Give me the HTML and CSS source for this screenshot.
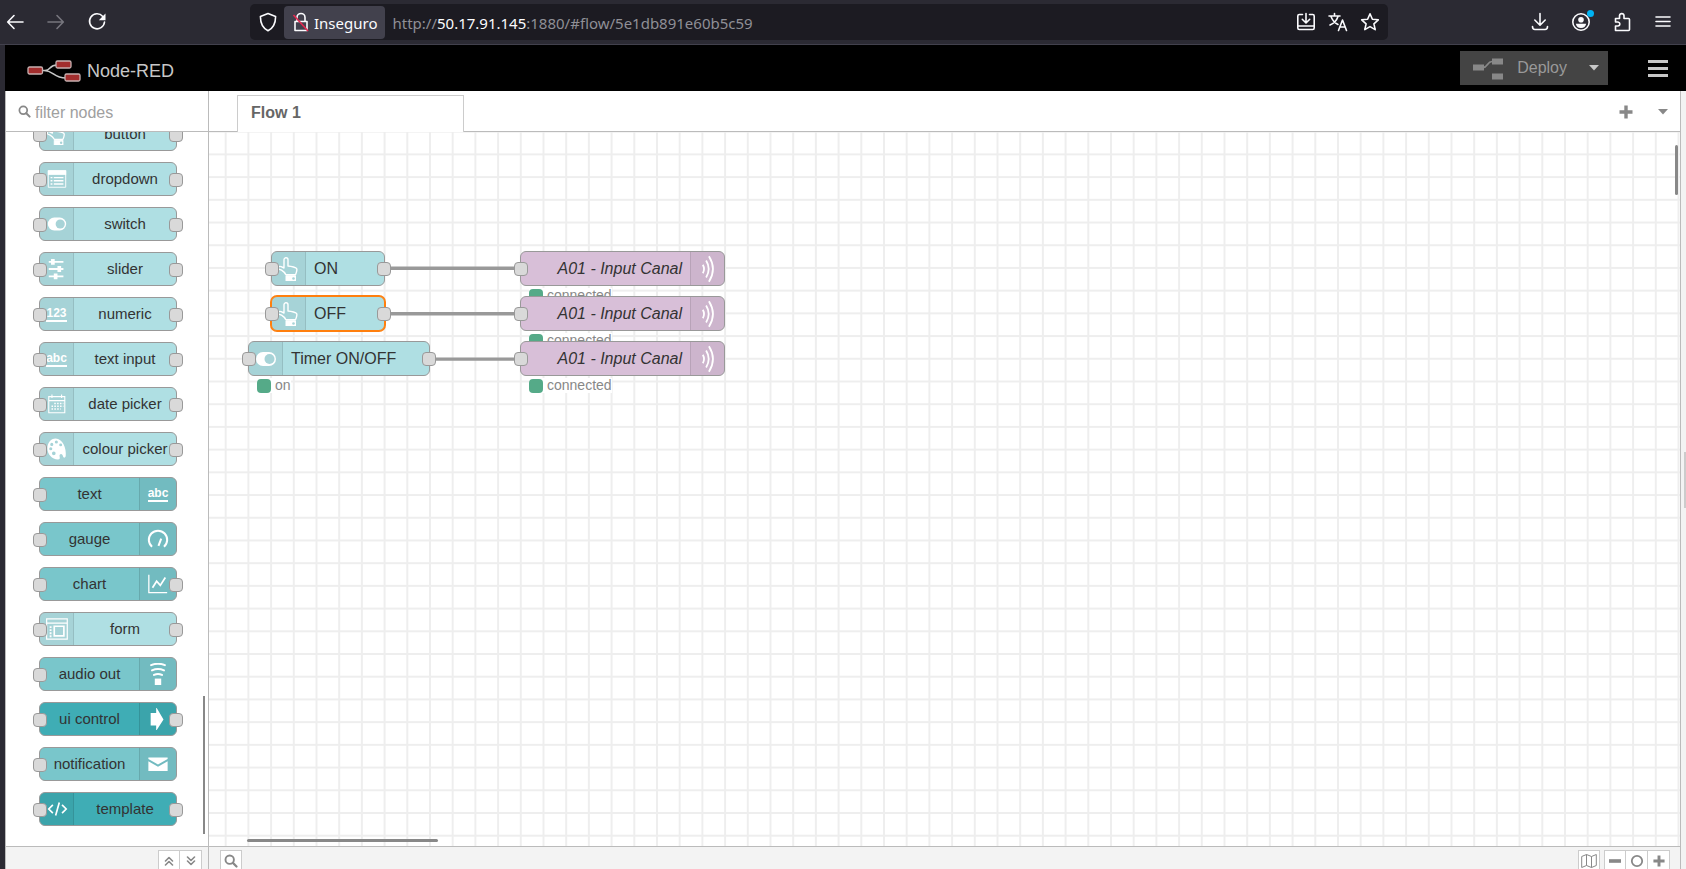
FILE: index.html
```html
<!DOCTYPE html>
<html lang="en">
<head>
<meta charset="utf-8">
<title>Node-RED : 50.17.91.145</title>
<link rel="stylesheet" href="styles.css">
</head>
<body>
<svg class="symbols" aria-hidden="true">
  <symbol id="i-hand" viewBox="0 0 24 24"><path d="M7 11V2.800a2 2 0 0 1 4 0V9l2.800.4 2.700.6 2.300.8q1.200.5 1.100 2-.2 2.500-1.400 5H9Q7.500 15 4.500 13.200L2.300 12.300Q.6 11.300 1.500 10q.9-1 2.700-.3z" fill="none" stroke="#fff" stroke-width="1.400" stroke-linejoin="round"/><path d="M9 18.800h9.500V24H9z" fill="#fff" stroke="#fff"/><circle cx="16.500" cy="21.500" r="1.300" fill="#a7d3d7"/></symbol>
  <symbol id="i-list" viewBox="0 0 24 24"><path d="M2.500 3h19v18h-19z" fill="none" stroke="#fff"/><path d="M2 2.500h20v5H2z" fill="#fff"/><path d="M5 10.500h2m1.500 0H19M5 14h2m1.500 0H19M5 17.500h2m1.500 0H19" stroke="#fff" stroke-width="1.600"/></symbol>
  <symbol id="i-switch" viewBox="0 0 24 24"><rect x="2" y="5" width="20" height="14" rx="7" fill="#fff"/><circle cx="15.500" cy="12" r="5" fill="#a7d3d7"/></symbol>
  <symbol id="i-slider" viewBox="0 0 24 24"><path d="M3 4.200h16M3 12h16M3 20h16" stroke="#fff" stroke-width="2"/><path d="M5.500 1h4v6.400h-4zM12.500 8.800h4v6.400h-4zM8.500 16.800h4v6.400h-4z" fill="#fff"/></symbol>
  <symbol id="i-date" viewBox="0 0 24 24"><path d="M3 4h17.500v17.500H3zM3 8.300h17.500M6.500 1.500v4M17 1.500v4" fill="none" stroke="#fff" stroke-width="1.200"/><path d="M9 11.500h10M6 14.500h13M6 17.500h10" stroke="#fff" stroke-width="1.500" stroke-dasharray="1.700 1.400"/></symbol>
  <symbol id="i-palette" viewBox="0 0 24 24"><path fill="#fff" fill-rule="evenodd" d="M10.500.5C5 .5 1.500 5.500 1.500 11.500S6.500 23.500 13 23.500c2.200 0 2.300-1.500 1.900-3-.5-2 .4-3 1.500-3s1.900 1.200 2.200 2.800c.4 1.600 2.200 1.700 2.900-.3C22.500 11 18 .5 10.500.5zM4.600 7a1.700 1.700 0 1 0 3.400 0 1.700 1.700 0 1 0-3.400 0zm5-2.700a1.700 1.700 0 1 0 3.400 0 1.700 1.700 0 1 0-3.400 0zM3.500 11.700a1.700 1.700 0 1 0 3.400 0 1.700 1.700 0 1 0-3.400 0zm3 5a2 2 0 1 0 4 0 2 2 0 1 0-4 0zm7.900-9.200a1.600 1.600 0 1 0 3.200 0 1.600 1.600 0 1 0-3.200 0z"/></symbol>
  <symbol id="i-gauge" viewBox="0 0 24 24"><path d="M5.500 20.500A10 10 0 1 1 18.500 20.500M12.500 19.500l3-8" fill="none" stroke="#fff" stroke-width="2.200"/></symbol>
  <symbol id="i-chart" viewBox="0 0 24 24"><path d="M2 2v19.500H22" fill="none" stroke="#fff" stroke-width="1.400"/><path d="M6 16l4.500-7 4 4.500L20 5" fill="none" stroke="#fff" stroke-width="1.900"/></symbol>
  <symbol id="i-form" viewBox="0 0 24 24"><path d="M.7 1h22.500v22H.7zM.7 5.500h22.500" fill="none" stroke="#fff" stroke-width="1.300"/><path d="M9 9h10.500v10.500H9z" fill="none" stroke="#fff" stroke-width="1.800"/><path d="M5 9v12" stroke="#fff" stroke-width="2" stroke-dasharray="2 1.300"/></symbol>
  <symbol id="i-audio" viewBox="0 0 24 24"><path d="M8.500 17h7v7h-7z" fill="#fff"/><path d="M4.500 2.300q7.500-3 15 0M5.500 8q6.500-3 13 0M7.700 13q4.300-2.200 8.600 0" fill="none" stroke="#fff" stroke-width="2.200" stroke-linecap="round"/></symbol>
  <symbol id="i-arrow" viewBox="0 0 24 24"><path d="M4 5.500h6V-1l8 13.500L10 25V19H4z" fill="#fff"/></symbol>
  <symbol id="i-mail" viewBox="0 0 24 24"><path d="M1.500 6v.5l10.500 6 10.500-6V5h-21zM1.500 9v10.500h21V9L12 15z" fill="#fff"/></symbol>
  <symbol id="i-code" viewBox="0 0 24 24"><path d="M7.500 7.500L3 12l4.500 4.500M17.500 7.500L22 12l-4.500 4.500M14.500 5l-4 14" fill="none" stroke="#fff" stroke-width="1.800"/></symbol>
  <symbol id="i-waves" viewBox="0 0 24 34"><path d="M6.500 12.500q2.600 4.500 0 9M10 8q5.500 9 0 18M13 3.500q8.500 13.500 0 27" fill="none" stroke="#fff" stroke-width="1.900"/></symbol>
  <symbol id="i-search" viewBox="0 0 14 14"><circle cx="5.700" cy="5.700" r="4.200" fill="none" stroke="currentColor" stroke-width="1.900"/><path d="M8.900 8.900l3.600 3.600" stroke="currentColor" stroke-width="2.200" stroke-linecap="round"/></symbol>
  <symbol id="i-caret" viewBox="0 0 10 6"><path d="M0 0h10L5 5.500z" fill="currentColor"/></symbol>
  <symbol id="i-plus" viewBox="0 0 14 14"><path d="M7 .5v13M.5 7h13" stroke="currentColor" stroke-width="3.400"/></symbol>
</svg>

<header class="browser">
  <nav class="nav-buttons" aria-label="Navigation">
    <button aria-label="Back"><svg width="20" height="20" viewBox="0 0 20 20"><path d="M18 10H3M9 3.500L2.700 10 9 16.500" class="line"/></svg></button>
    <button aria-label="Forward" class="dim"><svg width="20" height="20" viewBox="0 0 20 20"><path d="M2 10h15M11 3.500l6.300 6.500L11 16.500" class="line"/></svg></button>
    <button aria-label="Reload"><svg width="20" height="20" viewBox="0 0 20 20"><path d="M15.800 4.500A7.500 7.500 0 1 0 17.500 10" class="line"/><path d="M18.500 1.500v6.700h-6.700z" fill="currentColor"/></svg></button>
  </nav>
  <div class="address">
    <button class="shield" aria-label="Tracking protection"><svg width="20" height="20" viewBox="0 0 20 20"><path d="M10 1.500l7.600 3C17.600 11 15.500 16 10 18.800 4.500 16 2.400 11 2.400 4.500z" class="line"/></svg></button>
    <button class="identity"><svg width="18" height="20" viewBox="0 0 18 20"><path d="M5 9V5.500a4 4 0 0 1 8 0V9M3 9.500h12v9H3z" class="line"/><path d="M1.500 3l14.500 16" stroke="#e22850" stroke-width="1.700"/></svg><span>Inseguro</span></button>
    <div class="url" role="textbox" aria-label="Address">http://<b>50.17.91.145</b>:1880/#flow/5e1db891e60b5c59</div>
    <div class="page-actions">
      <button aria-label="Install"><svg width="20" height="20" viewBox="0 0 20 20"><path d="M6.500 2.500H3.300q-1.500 0-1.500 1.500v12q0 1.500 1.500 1.500h13.400q1.500 0 1.500-1.500V4q0-1.500-1.500-1.500h-3.200M2 14h16M10 1.500v9M6.300 7.300L10 11l3.700-3.700" class="line"/></svg></button>
      <button aria-label="Translate"><svg width="20" height="20" viewBox="0 0 20 20"><path d="M1 4h11M6.500 1.500V4M3 4.500q2 5.500 7 8M10 4.500Q8 10.500 2 13M10.500 18.500l4-10.500 4 10.500M12 15h5" class="line"/></svg></button>
      <button aria-label="Bookmark"><svg width="20" height="20" viewBox="0 0 20 20"><path d="M10 1.800l2.400 5.400 5.900.6-4.400 4 1.300 5.800L10 14.600l-5.200 3 1.300-5.800-4.400-4 5.900-.6z" class="line"/></svg></button>
    </div>
  </div>
  <div class="toolbar-end">
    <button aria-label="Downloads"><svg width="20" height="20" viewBox="0 0 20 20"><path d="M10 1.500V13M4.800 8l5.200 5.200L15.200 8M2.500 14.500q0 3 2.500 3h10q2.500 0 2.500-3" class="line"/></svg></button>
    <button aria-label="Account" class="account"><svg width="20" height="20" viewBox="0 0 20 20"><circle cx="10" cy="10" r="8.200" class="line"/><circle cx="10" cy="7.800" r="2.800" fill="currentColor"/><path d="M4.800 11.800h10.400q-.8 4.200-5.200 4.200t-5.200-4.200z" fill="currentColor"/></svg></button>
    <button aria-label="Extensions"><svg width="20" height="20" viewBox="0 0 20 20"><path d="M3.500 18.500V14H6q1.900-.3 1.900-2T6 10H3.500V6.500h4V3.600q.3-2 2.300-2t2.200 2v2.900h4.500q1 0 1 1v10q0 1-1 1z" class="line"/></svg></button>
    <button aria-label="Menu"><svg width="20" height="20" viewBox="0 0 20 20"><path d="M3 5h14M3 9.500h14M3 14h14" class="line"/></svg></button>
  </div>
</header>

<div class="app">
  <header class="app-header">
    <div class="brand">
      <svg width="54" height="24" viewBox="0 0 54 24"><path d="M14 11.500h4c6 0 4-5.500 12-5.500M17 11.500c10 0 9 7.500 22 7.500" fill="none" stroke="#c7c7c7" stroke-width="1.600"/><g fill="#a22d2d" stroke="#c7b0b0" stroke-width="1.300"><rect x="1" y="8" width="14.500" height="7" rx="1.500"/><rect x="29" y="2" width="15" height="7" rx="1.500"/><rect x="38" y="15" width="15" height="7" rx="1.500"/></g></svg>
      <span>Node-RED</span>
    </div>
    <div class="header-tools">
      <div class="deploy">
        <button class="deploy-main"><svg width="32" height="24" viewBox="0 0 32 24"><path d="M0 8.500h11v6H0zM19 2.500h11v6H19zM19 17.500h11v6H19z" fill="#888"/><path d="M10 11.500c5 0 4-6 9-6" fill="none" stroke="#888" stroke-width="1.600"/></svg><span>Deploy</span></button>
        <button class="deploy-options" aria-label="Deploy options"><svg width="10" height="6"><use href="#i-caret"/></svg></button>
      </div>
      <button class="main-menu" aria-label="Main menu"><i></i><i></i><i></i></button>
    </div>
  </header>

  <aside class="palette">
    <label class="filter"><svg width="13" height="13"><use href="#i-search"/></svg><input type="text" placeholder="filter nodes" aria-label="filter nodes"></label>
    <div class="palette-list">
      <div class="node light both"><span class="icon"><svg><use href="#i-hand"/></svg></span><span class="label">button</span></div>
      <div class="node light both"><span class="icon"><svg><use href="#i-list"/></svg></span><span class="label">dropdown</span></div>
      <div class="node light both"><span class="icon"><svg><use href="#i-switch"/></svg></span><span class="label">switch</span></div>
      <div class="node light both"><span class="icon"><svg><use href="#i-slider"/></svg></span><span class="label">slider</span></div>
      <div class="node light both"><span class="icon"><span class="glyph">123</span></span><span class="label">numeric</span></div>
      <div class="node light both"><span class="icon"><span class="glyph">abc</span></span><span class="label">text input</span></div>
      <div class="node light both"><span class="icon"><svg><use href="#i-date"/></svg></span><span class="label">date picker</span></div>
      <div class="node light both"><span class="icon"><svg><use href="#i-palette"/></svg></span><span class="label">colour picker</span></div>
      <div class="node mid in end"><span class="icon"><span class="glyph">abc</span></span><span class="label">text</span></div>
      <div class="node mid in end"><span class="icon"><svg><use href="#i-gauge"/></svg></span><span class="label">gauge</span></div>
      <div class="node mid both end"><span class="icon"><svg><use href="#i-chart"/></svg></span><span class="label">chart</span></div>
      <div class="node light both"><span class="icon"><svg><use href="#i-form"/></svg></span><span class="label">form</span></div>
      <div class="node mid in end"><span class="icon"><svg><use href="#i-audio"/></svg></span><span class="label">audio out</span></div>
      <div class="node deep both end"><span class="icon"><svg><use href="#i-arrow"/></svg></span><span class="label">ui control</span></div>
      <div class="node mid in end"><span class="icon"><svg><use href="#i-mail"/></svg></span><span class="label">notification</span></div>
      <div class="node deep both"><span class="icon"><svg><use href="#i-code"/></svg></span><span class="label">template</span></div>
      <div class="palette-scroll"></div>
    </div>
    <footer class="statusbar palette-footer">
      <div class="group">
        <button aria-label="Collapse all"><svg width="10" height="10" viewBox="0 0 10 10"><path d="M1.500 5L5 1.500 8.500 5M1.500 9L5 5.500 8.500 9" class="line"/></svg></button>
        <button aria-label="Expand all"><svg width="10" height="10" viewBox="0 0 10 10"><path d="M1.500 1L5 4.500 8.500 1M1.500 5L5 8.500 8.500 5" class="line"/></svg></button>
      </div>
    </footer>
  </aside>

  <main class="workspace">
    <div class="tabs">
      <a class="tab" href="#flow">Flow 1</a>
      <div class="tab-tools">
        <button aria-label="Add flow"><svg width="14" height="14"><use href="#i-plus"/></svg></button>
        <button aria-label="List flows"><svg width="10" height="6"><use href="#i-caret"/></svg></button>
      </div>
    </div>
    <div class="canvas">
      <svg class="grid" width="100%" height="100%">
        <defs><pattern id="grid" x="15.700" y="21.400" width="22.700" height="22.710" patternUnits="userSpaceOnUse"><path d="M1 0v23M0 1h23" stroke="#eee" stroke-width="2"/></pattern></defs>
        <rect width="100%" height="100%" fill="url(#grid)"/>
        <path d="M176 136.300h136M176 181.700h136M221 227.100h91" stroke="#999" stroke-width="3.400"/>
      </svg>
      <div class="node light both placed on"><span class="icon"><svg><use href="#i-hand"/></svg></span><span class="label">ON</span></div>
      <div class="node light both placed off selected"><span class="icon"><svg><use href="#i-hand"/></svg></span><span class="label">OFF</span></div>
      <div class="node light both placed timer"><span class="icon"><svg><use href="#i-switch"/></svg></span><span class="label">Timer ON/OFF</span><span class="status">on</span></div>
      <div class="node mqtt in end placed row1"><span class="icon"><svg><use href="#i-waves"/></svg></span><span class="label">A01 - Input Canal</span><span class="status">connected</span></div>
      <div class="node mqtt in end placed row2"><span class="icon"><svg><use href="#i-waves"/></svg></span><span class="label">A01 - Input Canal</span><span class="status">connected</span></div>
      <div class="node mqtt in end placed row3"><span class="icon"><svg><use href="#i-waves"/></svg></span><span class="label">A01 - Input Canal</span><span class="status">connected</span></div>
      <div class="scroll-x"></div>
      <div class="scroll-y"></div>
    </div>
    <footer class="statusbar">
      <div class="group"><button aria-label="Search flows"><svg width="14" height="14"><use href="#i-search"/></svg></button></div>
      <div class="view-tools">
        <div class="group"><button aria-label="Toggle navigator"><svg width="16" height="14" viewBox="0 0 16 14"><path d="M.7 2.500l4.800-2 5 2 4.800-2v11l-4.800 2-5-2-4.800 2zM5.500.5v11M10.500 2.500v11" fill="none" stroke="currentColor"/></svg></button></div>
        <div class="group">
          <button aria-label="Zoom out"><svg width="12" height="14" viewBox="0 0 12 14"><path d="M0 7h12" stroke="currentColor" stroke-width="3.600"/></svg></button>
          <button aria-label="Reset zoom"><svg width="14" height="14" viewBox="0 0 14 14"><circle cx="7" cy="7" r="5.200" fill="none" stroke="currentColor" stroke-width="1.800"/></svg></button>
          <button aria-label="Zoom in"><svg width="12" height="12"><use href="#i-plus"/></svg></button>
        </div>
      </div>
    </footer>
  </main>
  <div class="separator"><div class="handle"></div></div>
</div>
</body>
</html>
```
FILE: styles.css
```css
* { box-sizing: border-box; }
body {
  margin: 0;
  height: 100vh;
  display: flex;
  flex-direction: column;
  overflow: hidden;
  background: #2b2a33;
  font-family: "Liberation Sans", Arial, sans-serif;
  font-size: 16px;
  color: #333;
}
button {
  display: flex;
  align-items: center;
  justify-content: center;
  padding: 0;
  border: 0;
  background: none;
  color: inherit;
  font: inherit;
}
svg { display: block; flex: none; }
.symbols { position: absolute; width: 0; height: 0; }
.line { fill: none; stroke: currentColor; stroke-width: 1.6; stroke-linecap: round; stroke-linejoin: round; }

/* Browser toolbar */
.browser {
  display: flex;
  align-items: center;
  height: 45px;
  flex: none;
  padding: 0 13px 0 5px;
  border-bottom: 1px solid #42414d;
  color: #fbfbfe;
  font-family: "Noto Sans", "Open Sans", sans-serif;
}
.nav-buttons { display: flex; gap: 21px; width: 245px; flex: none; }
.nav-buttons .dim { color: #77767e; }
.address {
  display: flex;
  flex: 1;
  align-items: center;
  height: 36px;
  padding: 0 8px;
  border-radius: 5px;
  background: #1c1b22;
}
.identity {
  gap: 4px;
  height: 33px;
  margin: 0 7px 0 6px;
  padding: 0 8px;
  border-radius: 4px;
  background: #42414d;
  font-size: 15px;
}
.identity span, .url { padding-top: 2px; }
.url { flex: 1; color: #8f8f96; font-size: 15px; white-space: nowrap; }
.url b { color: #fbfbfe; font-weight: 400; }
.page-actions { display: flex; gap: 12px; }
.toolbar-end { display: flex; gap: 21px; width: 285px; flex: none; justify-content: flex-end; }
.account { position: relative; }
.account::after {
  content: "";
  position: absolute;
  top: -2px;
  right: -3px;
  width: 7px;
  height: 7px;
  border-radius: 50%;
  background: #00b3f4;
}

/* Editor frame */
.app {
  flex: 1;
  min-height: 0;
  margin-left: 5px;
  display: grid;
  grid-template: 46px minmax(0, 1fr) / 204px minmax(0, 1fr) 5px;
  background: #fff;
}
.app-header {
  grid-column: 1 / -1;
  display: flex;
  align-items: center;
  justify-content: space-between;
  padding: 0 18px 0 22px;
  background: #000;
  color: #c7c7c7;
}
.brand { display: flex; align-items: center; gap: 6px; padding-top: 6px; font-size: 18px; }
.header-tools { display: flex; align-items: center; gap: 39px; }
.deploy { display: flex; height: 34px; background: #444; }
.deploy-main { gap: 12px; padding: 0 13px; color: #999; }
.deploy-options { width: 28px; }
.main-menu { width: 21px; height: 17px; flex-direction: column; justify-content: space-between; }
.main-menu i { width: 20px; height: 3px; background: #c7c7c7; }

/* Palette */
.palette {
  display: flex;
  flex-direction: column;
  min-height: 0;
  border-left: 1px solid #bbb;
  border-right: 1px solid #bbb;
}
.filter {
  display: flex;
  align-items: center;
  gap: 4px;
  height: 41px;
  flex: none;
  padding: 0 12px;
  border-bottom: 1px solid #bbb;
  color: #888;
}
.filter input { width: 100%; min-width: 0; padding: 3px 0 0; border: 0; outline: 0; background: none; font: inherit; line-height: 24px; }
.filter input::placeholder { color: #a0a0a0; opacity: 1; }
.palette-list {
  position: relative;
  flex: 1;
  min-height: 0;
  display: flex;
  flex-direction: column;
  justify-content: flex-end;
  gap: 11px;
  overflow: hidden;
  padding: 0 31px 20px 33px;
  font-size: 15px;
}
.palette-scroll { position: absolute; right: 3px; bottom: 12px; width: 2px; height: 138px; background: #888; }

/* Nodes */
.node {
  position: relative;
  display: flex;
  flex: none;
  height: 34px;
  border: 1px solid #999;
  border-radius: 6px;
}
.node.end { flex-direction: row-reverse; }
.light { background: #afdfe3; }
.mid { background: #79c6cb; }
.deep { background: #3fadb5; }
.mqtt { background: #d8bfd8; }
.icon {
  display: flex;
  align-items: center;
  justify-content: center;
  width: 34px;
  flex: none;
  background: rgba(0, 0, 0, 0.05);
  border-right: 1px solid rgba(0, 0, 0, 0.1);
  border-radius: 5px 0 0 5px;
}
.end .icon { width: 37px; border-right: 0; border-left: 1px solid rgba(0, 0, 0, 0.1); border-radius: 0 5px 5px 0; }
.icon svg { width: 22px; height: 22px; overflow: visible; }
.glyph { color: #fff; font-size: 12px; font-weight: 700; line-height: 12px; border-bottom: 2px solid #fff; padding-bottom: 1px; }
.label { flex: 1; text-align: center; line-height: 31px; white-space: nowrap; }
.node::before, .both::after {
  content: "";
  position: absolute;
  top: 10px;
  left: -7px;
  width: 12px;
  height: 12px;
  border: 1px solid #999;
  border-radius: 4px;
  background: #d9d9d9;
}
.both::after { left: auto; right: -7px; }

/* Workspace */
.workspace { display: flex; flex-direction: column; min-width: 0; min-height: 0; border-right: 1px solid #bbb; }
.tabs { display: flex; align-items: flex-end; height: 41px; flex: none; box-shadow: inset 0 -1px #bbb; padding-left: 28px; }
.tab {
  width: 227px;
  height: 37px;
  padding: 0 13px;
  border: 1px solid #ccc;
  border-bottom: 0;
  background: #fff;
  color: #666;
  font-weight: 700;
  line-height: 34px;
  text-decoration: none;
}
.tab-tools { display: flex; align-items: center; gap: 25px; height: 100%; margin-left: auto; padding-right: 12px; color: #888; }
.canvas { position: relative; flex: 1; min-height: 0; overflow: hidden; }
.grid { position: absolute; inset: 0; }
.placed { position: absolute; height: 35px; }
.placed .icon { width: 34px; }
.placed .label { padding: 0 8px; text-align: left; line-height: 33px; }
.mqtt .label { text-align: right; font-style: italic; }
.placed .icon svg { width: 24px; height: 24px; }
.mqtt .icon svg { height: 32px; }
.on { left: 62px; top: 119px; width: 114px; }
.off { left: 62px; top: 164px; width: 114px; }
.timer { left: 39px; top: 209px; width: 182px; }
.mqtt { left: 311px; width: 205px; }
.row1 { top: 119px; }
.row2 { top: 164px; }
.row3 { top: 209px; }
.selected { border-color: #ff7f0e; box-shadow: 0 0 0 1px #ff7f0e; }
.status {
  position: absolute;
  left: 8px;
  top: 36px;
  display: flex;
  align-items: center;
  gap: 4px;
  background: #fff;
  color: #888;
  font-size: 14px;
  line-height: 15px;
}
.status::before { content: ""; width: 14px; height: 14px; border-radius: 4px; background: #5a8; }
.scroll-x { position: absolute; left: 38px; bottom: 4px; width: 191px; height: 3px; border-radius: 2px; background: #888; }
.scroll-y { position: absolute; right: 2px; top: 13px; width: 3px; height: 50px; border-radius: 2px; background: #888; }

/* Status bars */
.statusbar {
  display: flex;
  justify-content: space-between;
  height: 23px;
  flex: none;
  overflow: hidden;
  padding: 3px 10px 0 11px;
  border-top: 1px solid #bbb;
  background: #f3f3f3;
  color: #888;
}
.palette-footer { justify-content: flex-end; padding-right: 6px; }
.group { display: flex; height: 22px; border: 1px solid #ccc; background: #fff; }
.group button { width: 20px; }
.group button + button { width: 22px; border-left: 1px solid #ccc; }
.view-tools { display: flex; gap: 4px; }
.separator { display: flex; align-items: center; justify-content: flex-end; background: #f3f3f3; }
.handle { width: 2px; height: 56px; background: #ccc; }
```
